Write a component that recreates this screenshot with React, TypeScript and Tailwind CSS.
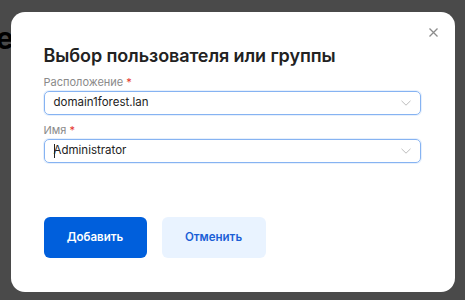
import React from 'react';

function Chevron() {
  return (
    <svg width="10" height="6" viewBox="0 0 10 6" fill="none" className="shrink-0">
      <path d="M0.5 0.8L5 5.2L9.5 0.8" stroke="#bdbdbd" strokeWidth="1" />
    </svg>
  );
}

function Field({ label, value, caret }: { label: string; value: string; caret?: boolean }) {
  return (
    <div className="flex flex-col">
      <label className="text-[11px] leading-[14px] text-[#8a8a8a]">
        {label} <span className="text-[#e5342c]">*</span>
      </label>
      <div className="mt-[2px] flex h-[24px] w-[377px] items-center justify-between rounded-[5px] border border-[#86b3f2] pl-[9px] pr-[9px] shadow-[0_0_0_1px_rgba(134,179,242,0.2)]">
        <span className="flex items-center text-[11.5px] text-[#222]">
          {caret && <span className="mr-[-1px] inline-block h-[14px] w-px bg-[#222]" />}
          {value}
        </span>
        <Chevron />
      </div>
    </div>
  );
}

export default function App() {
  return (
    <div className="relative h-[300px] w-[465px] overflow-hidden bg-white font-['Inter',sans-serif]">
      {/* page behind the dialog */}
      <div className="-ml-[4px] pt-[20px] text-[30px] font-bold leading-[36px] text-black">е</div>

      <div className="absolute inset-0 flex justify-center bg-black/[0.71] pt-[12px]">
        <div className="relative flex h-[280px] w-[444px] flex-col rounded-[14px] bg-white pl-[33px] pt-[32px]">
          <button className="absolute right-[17px] top-[16px] flex h-[9px] w-[9px] items-center justify-center">
            <svg width="9" height="9" viewBox="0 0 9 9" fill="none">
              <path d="M0.5 0.5l8 8M8.5 0.5l-8 8" stroke="#8c8c8c" strokeWidth="1.3" />
            </svg>
          </button>

          <h2 className="text-[18px] font-semibold leading-[24px] tracking-[-0.1px] text-[#222]">
            Выбор пользователя или группы
          </h2>

          <div className="mt-[7px] flex flex-col gap-[8px]">
            <Field label="Расположение" value="domain1forest.lan" />
            <Field label="Имя" value="Administrator" caret />
          </div>

          <div className="mt-[54px] flex gap-[15px]">
            <button className="h-[41px] w-[103px] rounded-[6px] bg-[#005fdc] text-[11.5px] font-semibold text-white">
              Добавить
            </button>
            <button className="h-[41px] w-[104px] rounded-[6px] bg-[#e9f3ff] text-[11.5px] font-semibold text-[#1a5fd6]">
              Отменить
            </button>
          </div>
        </div>
      </div>
    </div>
  );
}
